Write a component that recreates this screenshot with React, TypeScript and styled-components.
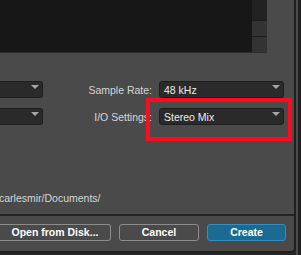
import React from "react";
import styled, { createGlobalStyle } from "styled-components";

const Global = createGlobalStyle`
  html, body { margin: 0; padding: 0; background: #1c1c1c; }
  body { font-family: "Liberation Sans", Arial, sans-serif; }
`;

const Screen = styled.div`
  position: relative;
  width: 301px;
  height: 255px;
  overflow: hidden;
  display: flex;
  background: #262626;
`;

const Window = styled.div`
  width: 294px;
  height: 251px;
  display: flex;
  flex-direction: column;
  background: #4a4a4a;
  border-right: 2px solid #1f1f1f;
  border-bottom: 2px solid #1f1f1f;
  border-bottom-right-radius: 5px;
  overflow: hidden;
`;

const Backdrop = styled.div`
  flex: 1;
  display: flex;
  border-left: 2px solid #4a4a4a;
  background: #1f1f1f;
`;

const TopRow = styled.div`
  display: flex;
  height: 53px;
  flex-shrink: 0;
`;

const ListArea = styled.div`
  width: 252px;
  background: #171717;
  border-bottom: 1px solid #2c2c2c;
`;

const Scrollbar = styled.div`
  width: 15px;
  display: flex;
  flex-direction: column;
  background: #222222;
  border-bottom: 1px solid #2c2c2c;
`;

const Track = styled.div`
  flex: 1;
`;

const ScrollButton = styled.div`
  height: 15px;
  background: #333333;
  border-top: 1px solid #1e1e1e;
`;

const Settings = styled.div`
  display: grid;
  grid-template-columns: 43px 1fr 125px;
  grid-auto-rows: 17px;
  column-gap: 7px;
  row-gap: 10px;
  padding: 28px 10px 0 0;
  align-items: center;
`;

const Select = styled.div<{ $left?: boolean }>`
  height: 17px;
  box-sizing: border-box;
  display: flex;
  align-items: center;
  justify-content: space-between;
  padding: 0 3px 0 4px;
  background: #2a2a2a;
  border: 1px solid #1e1e1e;
  border-left: ${(p) => (p.$left ? "none" : "1px solid #1e1e1e")};
  border-radius: ${(p) => (p.$left ? "0 3px 3px 0" : "3px")};
  color: #ececec;
  font-size: 10.5px;
`;

const Arrow = styled.span`
  width: 0;
  height: 0;
  margin-top: -5px;
  border-left: 4px solid transparent;
  border-right: 4px solid transparent;
  border-top: 4px solid #a6a6a6;
`;

const Label = styled.div`
  text-align: right;
  color: #d6d6d6;
  font-size: 10.5px;
  white-space: nowrap;
`;

const PathText = styled.div`
  margin-top: 67px;
  margin-left: -1px;
  color: #d6d6d6;
  font-size: 10.5px;
  white-space: nowrap;
  height: 24px;
`;

const Separator = styled.div`
  height: 2px;
  background: #242424;
  margin-top: auto;
`;

const ButtonBar = styled.div`
  display: flex;
  align-items: flex-start;
  gap: 8px;
  padding: 8px 0 0 0;
  height: 30px;
`;

const Button = styled.div<{ $primary?: boolean; $w: number; $cut?: boolean }>`
  width: ${(p) => p.$w}px;
  height: 17px;
  box-sizing: border-box;
  display: flex;
  align-items: center;
  justify-content: center;
  font-size: 10.5px;
  font-weight: bold;
  color: #ffffff;
  border: 1px solid ${(p) => (p.$primary ? "#3a8cbc" : "#8c8c8c")};
  border-left: ${(p) => (p.$cut ? "none" : "")};
  border-radius: ${(p) => (p.$cut ? "0 3px 3px 0" : "3px")};
  background: ${(p) => (p.$primary ? "#1b6a93" : "#4a4a4a")};
`;

const Highlight = styled.div`
  position: absolute;
  left: 146px;
  top: 98px;
  width: 146px;
  height: 43px;
  box-sizing: border-box;
  border: 4px solid #ff0a1e;
  pointer-events: none;
`;

export default function App() {
  return (
    <>
      <Global />
      <Screen>
        <Window>
          <TopRow>
            <ListArea />
            <Scrollbar>
              <Track />
              <ScrollButton />
              <ScrollButton />
            </Scrollbar>
          </TopRow>
          <Settings>
            <Select $left>
              <span />
              <Arrow />
            </Select>
            <Label>Sample Rate:</Label>
            <Select>
              <span>48 kHz</span>
              <Arrow />
            </Select>
            <Select $left>
              <span />
              <Arrow />
            </Select>
            <Label>I/O Settings:</Label>
            <Select>
              <span>Stereo Mix</span>
              <Arrow />
            </Select>
          </Settings>
          <PathText>carlesmir/Documents/</PathText>
          <Separator />
          <ButtonBar>
            <Button $w={111} $cut>
              Open from Disk...
            </Button>
            <Button $w={80}>Cancel</Button>
            <Button $w={79} $primary>
              Create
            </Button>
          </ButtonBar>
        </Window>
        <Backdrop />
        <Highlight />
      </Screen>
    </>
  );
}
